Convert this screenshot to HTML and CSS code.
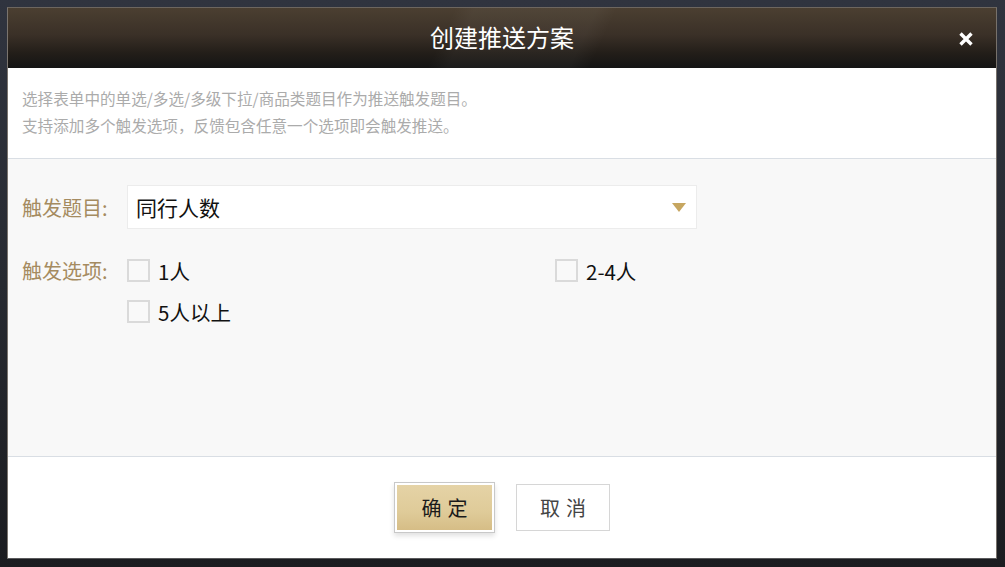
FILE: index.html
```html
<!DOCTYPE html>
<html lang="zh-CN">
<head>
<meta charset="utf-8">
<title>创建推送方案</title>
<link rel="stylesheet" href="styles.css">
</head>
<body>
<div class="page">
  <div class="modal">
    <div class="modal-header">
      <span></span>
      <h1 class="modal-title">创建推送方案</h1>
      <button class="close-btn" aria-label="关闭">
        <svg width="16" height="16" viewBox="0 0 16 16"><path d="M2.5 2.5 L13.5 13.5 M13.5 2.5 L2.5 13.5" stroke="#fff" stroke-width="3.4" stroke-linecap="butt"/></svg>
      </button>
    </div>
    <div class="intro">
      <p>选择表单中的单选/多选/多级下拉/商品类题目作为推送触发题目。</p>
      <p>支持添加多个触发选项，反馈包含任意一个选项即会触发推送。</p>
    </div>
    <div class="modal-body">
      <div class="form-row">
        <label class="form-label">触发题目:</label>
        <div class="select">
          <span class="select-value">同行人数</span>
          <span class="caret"></span>
        </div>
      </div>
      <div class="form-row options-row">
        <label class="form-label">触发选项:</label>
        <div class="options">
          <label class="option"><span class="checkbox"></span><span>1人</span></label>
          <label class="option"><span class="checkbox"></span><span>2-4人</span></label>
          <label class="option"><span class="checkbox"></span><span>5人以上</span></label>
        </div>
      </div>
    </div>
    <div class="modal-footer">
      <button class="btn btn-primary"><span class="btn-inner">确定</span></button>
      <button class="btn btn-default">取消</button>
    </div>
  </div>
</div>
</body>
</html>
```
FILE: styles.css
```css
* { box-sizing: border-box; }
html, body { margin: 0; padding: 0; }
body {
  width: 1005px;
  height: 567px;
  overflow: hidden;
  background: linear-gradient(180deg, #30343f 0%, #272a31 50%, #1b1c20 100%);
  font-family: "Noto Sans CJK SC", "Noto Sans", sans-serif;
}
.page {
  padding: 7px 0 0 7px;
}
.modal {
  width: 990px;
  height: 552px;
  border: 1px solid #6d665f;
  border-bottom-color: #5a5a5c;
  border-left-color: #7a746e;
  border-right-color: #77716b;
  display: flex;
  flex-direction: column;
  background: #fff;
}
.modal-header {
  height: 60px;
  flex: none;
  display: grid;
  grid-template-columns: 1fr auto 1fr;
  align-items: center;
  background:
    linear-gradient(115deg, rgba(255,255,255,0) 44%, rgba(255,255,255,0.035) 46%, rgba(255,255,255,0.035) 58%, rgba(255,255,255,0) 60%),
    linear-gradient(180deg, #4b3f31 0%, #3a3027 45%, #231e19 75%, #141414 100%);
}
.modal-title {
  margin: 0;
  color: #fff;
  font-size: 24px;
  font-weight: 400;
  line-height: 1;
  margin-top: -2px;
}
.close-btn {
  justify-self: end;
  margin-right: 22px;
  padding: 0;
  border: 0;
  background: none;
  width: 16px;
  height: 16px;
  display: block;
  margin-top: 2px;
}
.close-btn svg { display: block; }
.intro {
  height: 91px;
  flex: none;
  padding: 17px 14px 0;
  border-bottom: 1px solid #d9dee4;
  color: #ababab;
  font-size: 15.6px;
  line-height: 27px;
}
.intro p { margin: 0; }
.modal-body {
  height: 298px;
  flex: none;
  background: #f8f8f8;
  border-bottom: 1px solid #d9dee4;
  padding: 26px 13px 0 14px;
}
.form-row {
  display: grid;
  grid-template-columns: 105px 1fr;
  align-items: center;
}
.form-label {
  color: #a58b60;
  font-size: 20px;
  white-space: nowrap;
}
.select {
  width: 570px;
  height: 44px;
  background: #fff;
  border: 1px solid #ececec;
  display: flex;
  align-items: center;
  justify-content: space-between;
  padding: 0 10px 0 8px;
}
.select-value {
  font-size: 21px;
  color: #111;
}
.caret {
  width: 0;
  height: 0;
  border-left: 7px solid transparent;
  border-right: 7px solid transparent;
  border-top: 9px solid #c6a660;
  margin-top: 1px;
}
.options-row {
  margin-top: 30px;
  align-items: start;
}
.options-row .form-label {
  line-height: 24px;
}
.options {
  display: grid;
  grid-template-columns: 428px 428px;
  row-gap: 18px;
}
.option {
  display: flex;
  align-items: center;
  gap: 8px;
  font-size: 20.5px;
  color: #111;
  height: 23px;
}
.checkbox {
  width: 23px;
  height: 23px;
  border: 2px solid #dadada;
  background: #f9f9f9;
  flex: none;
}
.modal-footer {
  flex: 1;
  display: flex;
  align-items: center;
  justify-content: center;
  gap: 21px;
}
.btn {
  font-family: "Noto Sans CJK SC", "Noto Sans", sans-serif;
  font-size: 20px;
  letter-spacing: 6px;
  cursor: pointer;
  padding: 0;
}
.btn-primary {
  width: 101px;
  height: 51px;
  border: 1px solid #c8c8c8;
  background: #fff;
  padding: 2px;
  box-shadow: 0 3px 5px rgba(0,0,0,0.12);
}
.btn-inner {
  display: flex;
  align-items: center;
  justify-content: center;
  width: 100%;
  height: 100%;
  padding-left: 6px;
  background: linear-gradient(180deg, #e5d3a6 0%, #dfcb99 60%, #d6bd86 100%);
  color: #1a1a1a;
}
.btn-default {
  width: 94px;
  height: 47px;
  border: 1px solid #d6d6d6;
  background: #fff;
  color: #444;
  padding-left: 6px;
}
```
